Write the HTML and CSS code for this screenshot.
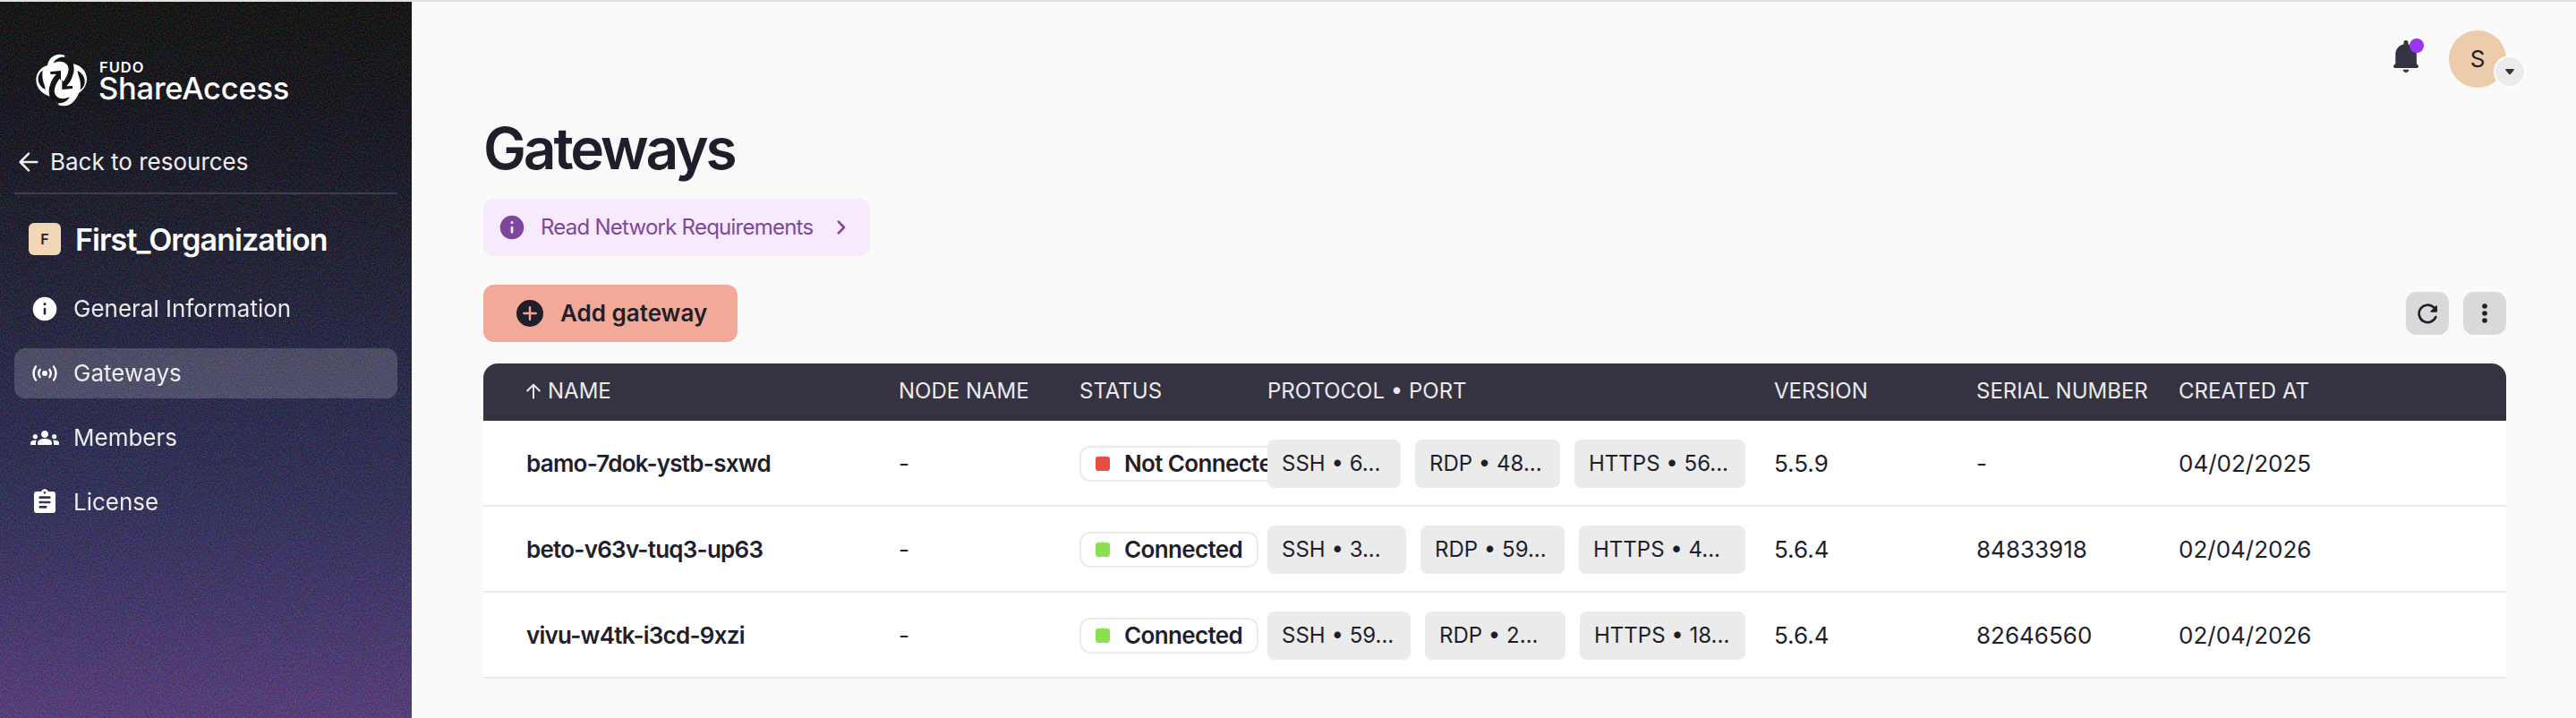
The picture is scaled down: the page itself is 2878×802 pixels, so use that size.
FILE: index.html
```
<!DOCTYPE html>
<html lang="en">
<head>
  <meta charset="UTF-8" />
  <meta name="viewport" content="width=device-width, initial-scale=1.0"/>
  <title>Gateways - ShareAccess</title>
  <link rel="stylesheet" href="styles.css">
</head>
<body>

  <aside class="sidebar">
    <svg class="grain" aria-hidden="true">
      <filter id="noise" color-interpolation-filters="sRGB" x="0" y="0" width="100%" height="100%">
        <feTurbulence type="fractalNoise" baseFrequency="0.6" numOctaves="2" seed="4"/>
        <feColorMatrix values="2.5 0 0 0 -0.9  0 2.5 0 0 -0.9  0 0 2.5 0 -0.9  0 0 0 0 0.14"/>
      </filter>
      <rect width="100%" height="100%" filter="url(#noise)"/>
    </svg>

    <div class="logo">
      <svg class="logo-mark" viewBox="0 0 210 210">
        <path fill="#fff" d="M57 57C60 36 77 20 97 20C118 20 136 34 141 52C166 54 189 76 189 103C189 122 178 140 162 150C154 174 134 193 113 193C94 193 75 181 69 161C43 158 19 134 19 106C19 82 34 63 57 57Z"/>
        <g id="half">
          <path fill="#131318" d="M77 50C84 33 106 25 122 32C154 48 150 98 121 126L109 114C126 90 133 70 123 55C112 42 92 42 77 50Z"/>
          <path fill="#131318" d="M106 106L106 138L141 135L141 126L123 127Z"/>
          <path fill="#131318" d="M41 74C18 88 21 124 50 138C50 122 36 108 41 74Z"/>
          <path fill="none" stroke="#131318" stroke-width="5" d="M114 26C136 34 147 54 142 84"/>
        </g>
        <use href="#half" transform="rotate(180 104 106.500)"/>
      </svg>
      <div class="logo-text">
        <span class="logo-brand">FUDO</span>
        <span class="logo-name">ShareAccess</span>
      </div>
    </div>

    <a class="back">
      <svg class="icon" viewBox="0 0 24 24"><path d="M19 12H5.500M12 5L5 12L12 19" fill="none" stroke="currentColor" stroke-width="1.900" stroke-linecap="round" stroke-linejoin="round"/></svg>
      <span>Back to resources</span>
    </a>

    <div class="org">
      <span class="org-badge">F</span>
      <span class="org-name">First_Organization</span>
    </div>

    <nav class="menu">
      <a class="menu-item">
        <svg class="icon" viewBox="0 0 24 24"><path d="M12 2C6.480 2 2 6.480 2 12s4.480 10 10 10 10-4.480 10-10S17.520 2 12 2zm0 15c-.55 0-1-.45-1-1v-4c0-.55.45-1 1-1s1 .45 1 1v4c0 .55-.45 1-1 1zm1-8h-2V7h2v2z"/></svg>
        <span>General Information</span>
      </a>
      <a class="menu-item active">
        <svg class="icon" viewBox="0 0 24 24">
          <circle cx="12" cy="12" r="2.200"/>
          <path fill="none" stroke="currentColor" stroke-width="1.800" stroke-linecap="round" d="M8 8.900a5.400 5.400 0 0 0 0 6.200M16 8.900a5.400 5.400 0 0 1 0 6.200M4.500 6.300a9.600 9.600 0 0 0 0 11.400M19.500 6.300a9.600 9.600 0 0 1 0 11.400"/>
        </svg>
        <span>Gateways</span>
      </a>
      <a class="menu-item">
        <svg class="icon" viewBox="0 0 24 24"><path d="M12 12.750c1.630 0 3.070.39 4.240.9 1.080.48 1.760 1.560 1.760 2.730V17c0 .55-.45 1-1 1H7c-.55 0-1-.45-1-1v-.61c0-1.180.68-2.260 1.760-2.730 1.170-.52 2.610-.91 4.240-.91zM4 13c1.100 0 2-.9 2-2s-.9-2-2-2-2 .9-2 2 .9 2 2 2zm1.130 1.100C4.760 14.040 4.390 14 4 14c-.99 0-1.930.21-2.780.58C.48 14.900 0 15.620 0 16.430V17c0 .55.45 1 1 1h3.500v-1.610c0-.83.23-1.610.63-2.290zM20 13c1.100 0 2-.9 2-2s-.9-2-2-2-2 .9-2 2 .9 2 2 2zm4 3.430c0-.81-.48-1.530-1.220-1.850C21.930 14.210 20.990 14 20 14c-.39 0-.76.04-1.130.1.400.68.63 1.460.63 2.290V18H23c.55 0 1-.45 1-1v-.57zM12 6c1.660 0 3 1.340 3 3s-1.340 3-3 3-3-1.340-3-3 1.340-3 3-3z"/></svg>
        <span>Members</span>
      </a>
      <a class="menu-item">
        <svg class="icon" viewBox="0 0 24 24"><path d="M19 3h-4.180C14.400 1.840 13.300 1 12 1s-2.400.84-2.820 2H5c-1.100 0-2 .9-2 2v14c0 1.100.9 2 2 2h14c1.100 0 2-.9 2-2V5c0-1.100-.9-2-2-2zm-7 0c.55 0 1 .45 1 1s-.45 1-1 1-1-.45-1-1 .45-1 1-1zm1 14H8c-.55 0-1-.45-1-1s.45-1 1-1h5c.55 0 1 .45 1 1s-.45 1-1 1zm3-4H8c-.55 0-1-.45-1-1s.45-1 1-1h8c.55 0 1 .45 1 1s-.45 1-1 1zm0-4H8c-.55 0-1-.45-1-1s.45-1 1-1h8c.55 0 1 .45 1 1s-.45 1-1 1z"/></svg>
        <span>License</span>
      </a>
    </nav>
  </aside>

  <main class="main">
    <div class="topbar">
      <div class="bell">
        <svg viewBox="0 0 28 36">
          <path d="M14 0a2.500 2.500 0 0 0-2.500 2.500V4.500C6 5.700 2.300 10 2.300 16V26L.6 27.800C-.6 29.200.2 31 1.800 31H26.200C27.800 31 28.600 29.200 27.400 27.800L25.900 26V16C25.900 10 22 5.700 16.500 4.500V2.500A2.500 2.500 0 0 0 14 0Z"/>
          <path d="M10.500 32.800H17.500C17 34.700 15.700 36 14 36S11 34.700 10.500 32.800Z"/>
        </svg>
        <span class="bell-dot"></span>
      </div>
      <div class="avatar">
        S
        <span class="avatar-toggle"><svg viewBox="0 0 10 7"><path d="M1 0H9Q10.300 .4 9.500 1.600L6 5.700Q5 6.700 4 5.700L.5 1.600Q-.3 .4 1 0Z"/></svg></span>
      </div>
    </div>

    <h1 class="title">Gateways</h1>

    <a class="info-box">
      <svg class="icon" viewBox="0 0 24 24"><path d="M12 2C6.480 2 2 6.480 2 12s4.480 10 10 10 10-4.480 10-10S17.520 2 12 2zm0 15c-.55 0-1-.45-1-1v-4c0-.55.45-1 1-1s1 .45 1 1v4c0 .55-.45 1-1 1zm1-8h-2V7h2v2z"/></svg>
      <span class="info-text">Read Network Requirements</span>
      <svg class="chevron" viewBox="0 0 10 16"><path d="M1.800 1.600L8 8L1.800 14.400" fill="none" stroke="currentColor" stroke-width="2.600" stroke-linecap="round" stroke-linejoin="round"/></svg>
    </a>

    <div class="toolbar">
      <button class="add-btn">
        <svg viewBox="0 0 30 30"><circle cx="15" cy="15" r="15"/><path d="M15 8.300V21.700M8.300 15H21.700" stroke="#f2a997" stroke-width="2.400" stroke-linecap="round"/></svg>
        <span>Add gateway</span>
      </button>
      <div class="tools">
        <button class="tool-btn"><svg viewBox="0 0 24 24"><path d="M21.300 16A9.700 9.700 0 1 1 19 5.300" fill="none" stroke="currentColor" stroke-width="2.600" stroke-linecap="round"/><path d="M23 4.200V9.600Q23 10.800 21.800 10.800H16.400Q14.800 10.600 15.700 9.300L21.500 3.500Q22.700 2.700 23 4.200Z"/></svg></button>
        <button class="tool-btn"><svg viewBox="0 0 24 24"><circle cx="12" cy="4" r="2.800"/><circle cx="12" cy="12" r="2.800"/><circle cx="12" cy="20" r="2.800"/></svg></button>
      </div>
    </div>

    <div class="table">
      <div class="row head">
        <div><svg class="sort" viewBox="0 0 16 18"><path d="M8 16.500V2M1.200 8.500L8 1.700L14.800 8.500" fill="none" stroke="currentColor" stroke-width="2" stroke-linecap="round" stroke-linejoin="round"/></svg>NAME</div>
        <div>NODE NAME</div>
        <div>STATUS</div>
        <div>PROTOCOL • PORT</div>
        <div>VERSION</div>
        <div>SERIAL NUMBER</div>
        <div>CREATED AT</div>
      </div>

      <div class="row">
        <div class="name">bamo-7dok-ystb-sxwd</div>
        <div>-</div>
        <div class="status"><span class="badge"><i class="dot red"></i>Not Connected</span></div>
        <div class="ports">
          <span class="chip" style="width:149px">SSH • 6...</span>
          <span class="chip" style="width:162px">RDP • 48...</span>
          <span class="chip" style="width:191px">HTTPS • 56...</span>
        </div>
        <div>5.5.9</div>
        <div>-</div>
        <div>04/02/2025</div>
      </div>

      <div class="row">
        <div class="name">beto-v63v-tuq3-up63</div>
        <div>-</div>
        <div class="status"><span class="badge"><i class="dot green"></i>Connected</span></div>
        <div class="ports">
          <span class="chip" style="width:155px">SSH • 3...</span>
          <span class="chip" style="width:161px">RDP • 59...</span>
          <span class="chip" style="width:186px">HTTPS • 4...</span>
        </div>
        <div>5.6.4</div>
        <div>84833918</div>
        <div>02/04/2026</div>
      </div>

      <div class="row">
        <div class="name">vivu-w4tk-i3cd-9xzi</div>
        <div>-</div>
        <div class="status"><span class="badge"><i class="dot green"></i>Connected</span></div>
        <div class="ports">
          <span class="chip" style="width:160px">SSH • 59...</span>
          <span class="chip" style="width:157px">RDP • 2...</span>
          <span class="chip" style="width:185px">HTTPS • 18...</span>
        </div>
        <div>5.6.4</div>
        <div>82646560</div>
        <div>02/04/2026</div>
      </div>
    </div>
  </main>

</body>
</html>
```
FILE: styles.css
```
* {
  box-sizing: border-box;
}

body {
  margin: 0;
  height: 802px;
  display: flex;
  overflow: hidden;
  border-top: 2px solid #e1e1e1;
  background: #fafafa;
  color: #211e2b;
  font-family: Inter, "Liberation Sans", sans-serif;
  font-size: 26px;
}

svg {
  display: block;
  flex: none;
  fill: currentColor;
}

button {
  border: none;
  padding: 0;
  color: inherit;
  font-family: inherit;
  cursor: pointer;
}

.icon {
  width: 32px;
  height: 32px;
}

/* sidebar */
.sidebar {
  position: relative;
  width: 460px;
  height: 800px;
  flex: none;
  padding: 52px 16px 0;
  color: #fff;
  background: linear-gradient(to bottom, #0c0c0a 0%, #0f0f18 15%, #18182b 32%, #232347 52%, #2d2c59 70%, #3b3167 80%, #553a7c 100%);
}

.grain {
  position: absolute;
  top: 0;
  left: 0;
  width: 100%;
  height: 100%;
}

.logo,
.back,
.org,
.menu {
  position: relative;
}

.logo {
  display: flex;
  align-items: center;
  gap: 6px;
  height: 70px;
  padding-left: 18px;
}

.logo-mark {
  width: 70px;
  height: 70px;
}

.logo-text {
  display: flex;
  flex-direction: column;
}

.logo-brand {
  padding-left: 1px;
  font-size: 16.500px;
  font-weight: 600;
  line-height: 20px;
  letter-spacing: 1px;
}

.logo-name {
  font-size: 34.500px;
  font-weight: 500;
  line-height: 28px;
  letter-spacing: -0.250px;
}

.back {
  display: flex;
  align-items: center;
  gap: 8px;
  height: 52px;
  margin-top: 41px;
  padding-bottom: 18px;
  border-bottom: 2px solid #403e4a;
  color: #efeff1;
}

.back span {
  margin-bottom: 1px;
}

.org {
  display: flex;
  align-items: center;
  gap: 16px;
  height: 36px;
  margin: 32px 0;
  padding-left: 16px;
}

.org-badge {
  width: 36px;
  height: 36px;
  border-radius: 6px;
  background: #f2d7b7;
  color: #211e2b;
  font-size: 16px;
  font-weight: 600;
  line-height: 36px;
  text-align: center;
}

.org-name {
  font-size: 34px;
  font-weight: 600;
  letter-spacing: -0.920px;
}

.menu {
  display: flex;
  flex-direction: column;
  gap: 16px;
}

.menu-item {
  display: flex;
  align-items: center;
  gap: 16px;
  height: 56px;
  padding-left: 18px;
  border-radius: 12px;
}

.menu-item span {
  margin-bottom: 2px;
  opacity: 0.9;
}

.menu-item.active {
  background: rgba(255, 255, 255, 0.17);
}

/* main */
.main {
  flex: 1;
  padding: 0 78px 0 80px;
}

.topbar {
  display: flex;
  align-items: center;
  justify-content: flex-end;
  gap: 34px;
  height: 128px;
}

.bell {
  position: relative;
  margin-bottom: 6px;
  color: #353242;
}

.bell svg {
  width: 28px;
  height: 36px;
}

.bell-dot {
  position: absolute;
  top: -2px;
  right: -6px;
  width: 16px;
  height: 16px;
  border-radius: 50%;
  background: #9b33f3;
}

.avatar {
  position: relative;
  width: 64px;
  height: 64px;
  border-radius: 50%;
  background: #ecccaa;
  line-height: 64px;
  text-align: center;
}

.avatar-toggle {
  position: absolute;
  right: -22px;
  bottom: 0;
  width: 36px;
  height: 36px;
  border: 2px solid #fdfdfd;
  border-radius: 50%;
  background: #ebebeb;
  color: #353242;
  display: flex;
  align-items: center;
  justify-content: center;
}

.avatar-toggle svg {
  width: 10px;
  height: 7px;
}

.title {
  margin: 4px 0 24px;
  font-size: 64px;
  font-weight: 600;
  line-height: 64px;
  letter-spacing: -3.150px;
}

.info-box {
  display: flex;
  align-items: center;
  width: 432px;
  height: 64px;
  padding: 0 27px 0 16px;
  border-radius: 12px;
  background: #f7eafc;
  color: #7f479b;
  font-size: 24px;
  letter-spacing: -0.760px;
}

.info-text {
  margin-left: 16px;
  margin-bottom: 1px;
}

.chevron {
  width: 10px;
  height: 16px;
  margin-left: auto;
}

.toolbar {
  display: flex;
  align-items: center;
  justify-content: space-between;
  margin: 32px 0 24px;
}

.add-btn {
  display: flex;
  align-items: center;
  gap: 19px;
  width: 284px;
  height: 64px;
  padding-left: 37px;
  border-radius: 12px;
  background: #f2a997;
  font-size: 26px;
  font-weight: 600;
}

.add-btn span {
  margin-bottom: 1px;
}

.add-btn svg {
  width: 30px;
  height: 30px;
}

.tools {
  display: flex;
  gap: 16px;
}

.tool-btn {
  display: flex;
  align-items: center;
  justify-content: center;
  width: 48px;
  height: 48px;
  border-radius: 12px;
  background: #d9d9d9;
}

.tool-btn svg {
  width: 24px;
  height: 24px;
}

/* table */
.table {
  border-radius: 16px 16px 0 0;
  overflow: hidden;
  background: #fff;
}

.row {
  display: grid;
  grid-template-columns: 416px 202px 210px 566px 226px 226px 1fr;
  align-items: center;
  height: 96px;
  padding-left: 48px;
  box-shadow: inset 0 -2px #ebebeb;
}

.row > div {
  line-height: 30px;
}

.head {
  height: 64px;
  padding-bottom: 2px;
  background: #353242;
  box-shadow: none;
  color: #ebebeb;
  font-size: 24px;
}

.head div {
  display: flex;
  align-items: center;
}

.sort {
  width: 16px;
  height: 18px;
  margin-right: 8px;
}

.name,
.badge {
  font-weight: 600;
  letter-spacing: -0.750px;
}

.status {
  overflow: hidden;
}

.badge {
  display: inline-flex;
  align-items: center;
  gap: 16px;
  height: 40px;
  padding: 0 16px;
  border: 2px solid #ebebeb;
  border-radius: 12px;
  letter-spacing: -0.650px;
  white-space: nowrap;
  vertical-align: middle;
}

.dot {
  width: 16px;
  height: 16px;
  border-radius: 3px;
}

.red {
  background: #e74c46;
}

.green {
  background: #8ce04d;
}

.ports {
  display: flex;
  gap: 16px;
}

.chip {
  height: 54px;
  padding-left: 16px;
  border-radius: 8px;
  background: #ebebeb;
  font-size: 24px;
  line-height: 53px;
  white-space: nowrap;
}
```
